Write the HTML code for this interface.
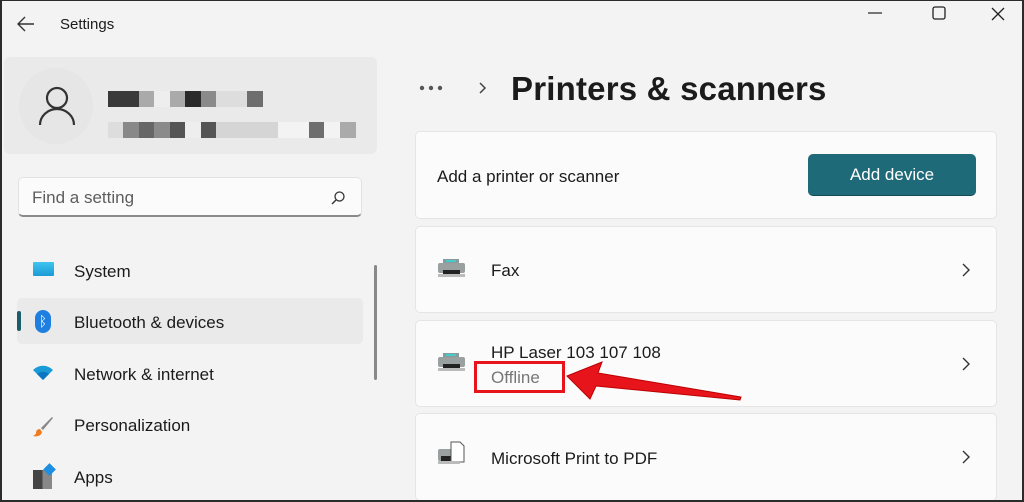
<!DOCTYPE html>
<html><head><style>
*{box-sizing:border-box;margin:0;padding:0}
body{width:1024px;height:502px;overflow:hidden;background:#f3f3f3;font-family:"Liberation Sans",sans-serif;color:#1b1b1b;position:relative}
.frame{position:absolute;left:0;top:0;width:1024px;height:502px;border:2px solid #2b2b2b;border-top-width:1px;pointer-events:none;z-index:5}
.a{position:absolute}
.card{position:absolute;left:415px;width:582px;background:#fbfbfb;border:1px solid #e5e5e5;border-radius:5px}
.t{position:absolute;font-size:17px}
.chev{position:absolute;left:960px}
</style></head><body>
<div class="frame"></div>
<svg class="a" style="left:16px;top:15px" width="20" height="18"><path d="M18 9H3M9 2L2 9l7 7" stroke="#333" stroke-width="1.4" fill="none"/></svg>
<div class="t" style="left:60px;top:16px;font-size:15px">Settings</div>
<svg class="a" style="left:866px;top:6px" width="150" height="20"><path d="M2 7h14" stroke="#222" stroke-width="1.2"/><rect x="67" y="1" width="12" height="12" rx="2" fill="none" stroke="#222" stroke-width="1.3"/><path d="M126 2l12 12M138 2l-12 12" stroke="#222" stroke-width="1.3"/></svg>
<div class="a" style="left:4px;top:57px;width:373px;height:97px;background:#eaeaea;border-radius:6px"></div>
<div class="a" style="left:19px;top:68px;width:74px;height:76px;border-radius:50%;background:#e6e6e6"></div>
<svg class="a" style="left:38px;top:86px" width="38" height="40"><circle cx="19" cy="12" r="10" fill="none" stroke="#333" stroke-width="2.2"/><path d="M2 39a17 16 0 0 1 34 0" fill="none" stroke="#333" stroke-width="2.2"/></svg>
<div class="a" style="left:108px;top:91px;width:155px;height:16px;background:linear-gradient(90deg,#3a3a3a 0 31px,#aaa 31px 46px,#eee 46px 62px,#aaa 62px 77px,#2a2a2a 77px 93px,#8a8a8a 93px 108px,#ddd 108px 139px,#6e6e6e 139px)"></div>
<div class="a" style="left:108px;top:122px;width:248px;height:16px;background:linear-gradient(90deg,#ddd 0 15px,#888 15px 31px,#666 31px 46px,#8a8a8a 46px 62px,#555 62px 77px,#eee 77px 93px,#555 93px 108px,#d5d5d5 108px 170px,#f3f3f3 170px 201px,#6e6e6e 201px 216px,#f3f3f3 216px 232px,#aaa 232px)"></div>
<div class="a" style="left:18px;top:177px;width:344px;height:40px;background:#fbfbfb;border:1px solid #e2e2e2;border-bottom:2px solid #8a8a8a;border-radius:5px"></div>
<div class="t" style="left:32px;top:188px;color:#5d5d5d">Find a setting</div>
<svg class="a" style="left:330px;top:190px" width="16" height="16"><circle cx="9.5" cy="6.5" r="4.5" fill="none" stroke="#333" stroke-width="1.3"/><path d="M6 10l-4 4" stroke="#333" stroke-width="1.4"/></svg>
<div class="a" style="left:374px;top:265px;width:3px;height:115px;background:#888;border-radius:2px"></div>
<div class="a" style="left:17px;top:298px;width:346px;height:46px;background:#eaeaea;border-radius:5px"></div>
<div class="a" style="left:17px;top:311px;width:4px;height:20px;background:#1b5e6a;border-radius:2px"></div>
<div class="a" style="left:33px;top:262px;width:21px;height:14px;background:linear-gradient(#40c4ef,#1a9ad6);border-radius:1px"></div>
<div class="a" style="left:35px;top:310px;width:16px;height:23px;border-radius:8px;background:#1e7fe0;color:#fff;font-size:14px;text-align:center;line-height:23px">&#x16d2;</div>
<svg class="a" style="left:32px;top:365px" width="22" height="16"><path d="M1 5a14 14 0 0 1 20 0L11 15z" fill="#1a9ad6"/><path d="M5 9a9 9 0 0 1 12 0L11 15z" fill="#0d76c0"/></svg>
<svg class="a" style="left:32px;top:415px" width="22" height="22"><path d="M20 2L9 13l2 2L21 3z" fill="#888"/><path d="M8 14c-3 0-4 2-4 4 0 1-1 2-3 3 4 1 8 0 9-4z" fill="#f07a1e"/></svg>
<div class="a" style="left:33px;top:470px;width:19px;height:19px;background:linear-gradient(90deg,#444 0 50%,#888 50%)"></div>
<div class="a" style="left:45px;top:465px;width:9px;height:9px;background:#1e8fe0;transform:rotate(45deg)"></div>
<div class="t" style="left:74px;top:262px">System</div>
<div class="t" style="left:74px;top:313px">Bluetooth &amp; devices</div>
<div class="t" style="left:74px;top:365px">Network &amp; internet</div>
<div class="t" style="left:74px;top:416px">Personalization</div>
<div class="t" style="left:74px;top:468px">Apps</div>
<svg class="a" style="left:418px;top:82px" width="80" height="16"><circle cx="4" cy="6" r="2.2" fill="#555"/><circle cx="13" cy="6" r="2.2" fill="#555"/><circle cx="22" cy="6" r="2.2" fill="#555"/><path d="M62 1l5 5-5 5" stroke="#444" stroke-width="1.5" fill="none"/></svg>
<div class="t" style="left:511px;top:70px;font-size:33px;font-weight:bold;color:#1b1b1b;letter-spacing:0.2px">Printers &amp; scanners</div>
<div class="card" style="top:131px;height:88px"></div>
<div class="t" style="left:437px;top:167px">Add a printer or scanner</div>
<div class="a" style="left:808px;top:154px;width:168px;height:42px;background:#1f6a78;border-radius:5px;border-bottom:1px solid #124a55;color:#fff;font-size:17px;text-align:center;line-height:41px">Add device</div>
<div class="card" style="top:226px;height:87px"></div>
<div class="card" style="top:320px;height:87px"></div>
<div class="card" style="top:413px;height:88px"></div>
<svg class="a" style="left:437px;top:258px" width="30" height="22"><rect x="6" y="1" width="16" height="5" fill="#8a9a9a"/><rect x="9" y="2" width="10" height="2" fill="#4cc"/><rect x="1" y="5" width="27" height="10" rx="2" fill="#9aa0a0"/><rect x="6" y="12" width="17" height="5" fill="#222"/><rect x="1" y="16" width="27" height="3" fill="#bbb"/></svg>
<svg class="a" style="left:437px;top:352px" width="30" height="22"><rect x="6" y="1" width="16" height="5" fill="#8a9a9a"/><rect x="9" y="2" width="10" height="2" fill="#4cc"/><rect x="1" y="5" width="27" height="10" rx="2" fill="#9aa0a0"/><rect x="6" y="12" width="17" height="5" fill="#222"/><rect x="1" y="16" width="27" height="3" fill="#bbb"/></svg>
<svg class="a" style="left:437px;top:441px" width="30" height="26"><rect x="1" y="8" width="20" height="12" rx="2" fill="#9aa0a0"/><rect x="4" y="15" width="14" height="5" fill="#222"/><path d="M14 1h9l4 4v16H14z" fill="#fff" stroke="#555"/><rect x="1" y="20" width="22" height="3" fill="#bbb"/></svg>
<div class="t" style="left:491px;top:261px">Fax</div>
<div class="t" style="left:491px;top:343px">HP Laser 103 107 108</div>
<div class="t" style="left:491px;top:368px;color:#777">Offline</div>
<div class="t" style="left:491px;top:449px">Microsoft Print to PDF</div>
<svg class="chev" style="top:262px" width="12" height="16"><path d="M3 2l6 6-6 6" stroke="#333" stroke-width="1.4" fill="none"/></svg>
<svg class="chev" style="top:356px" width="12" height="16"><path d="M3 2l6 6-6 6" stroke="#333" stroke-width="1.4" fill="none"/></svg>
<svg class="chev" style="top:449px" width="12" height="16"><path d="M3 2l6 6-6 6" stroke="#333" stroke-width="1.4" fill="none"/></svg>
<div class="a" style="left:474px;top:361px;width:91px;height:32px;border:3px solid #e8141c"></div>
<svg class="a" style="left:560px;top:360px" width="190" height="50"><path d="M7 16L42 2 38 13 181 37 180 40 36 26 30 39z" fill="#e8141c" stroke="#b00" stroke-width="1"/></svg>
</body></html>
